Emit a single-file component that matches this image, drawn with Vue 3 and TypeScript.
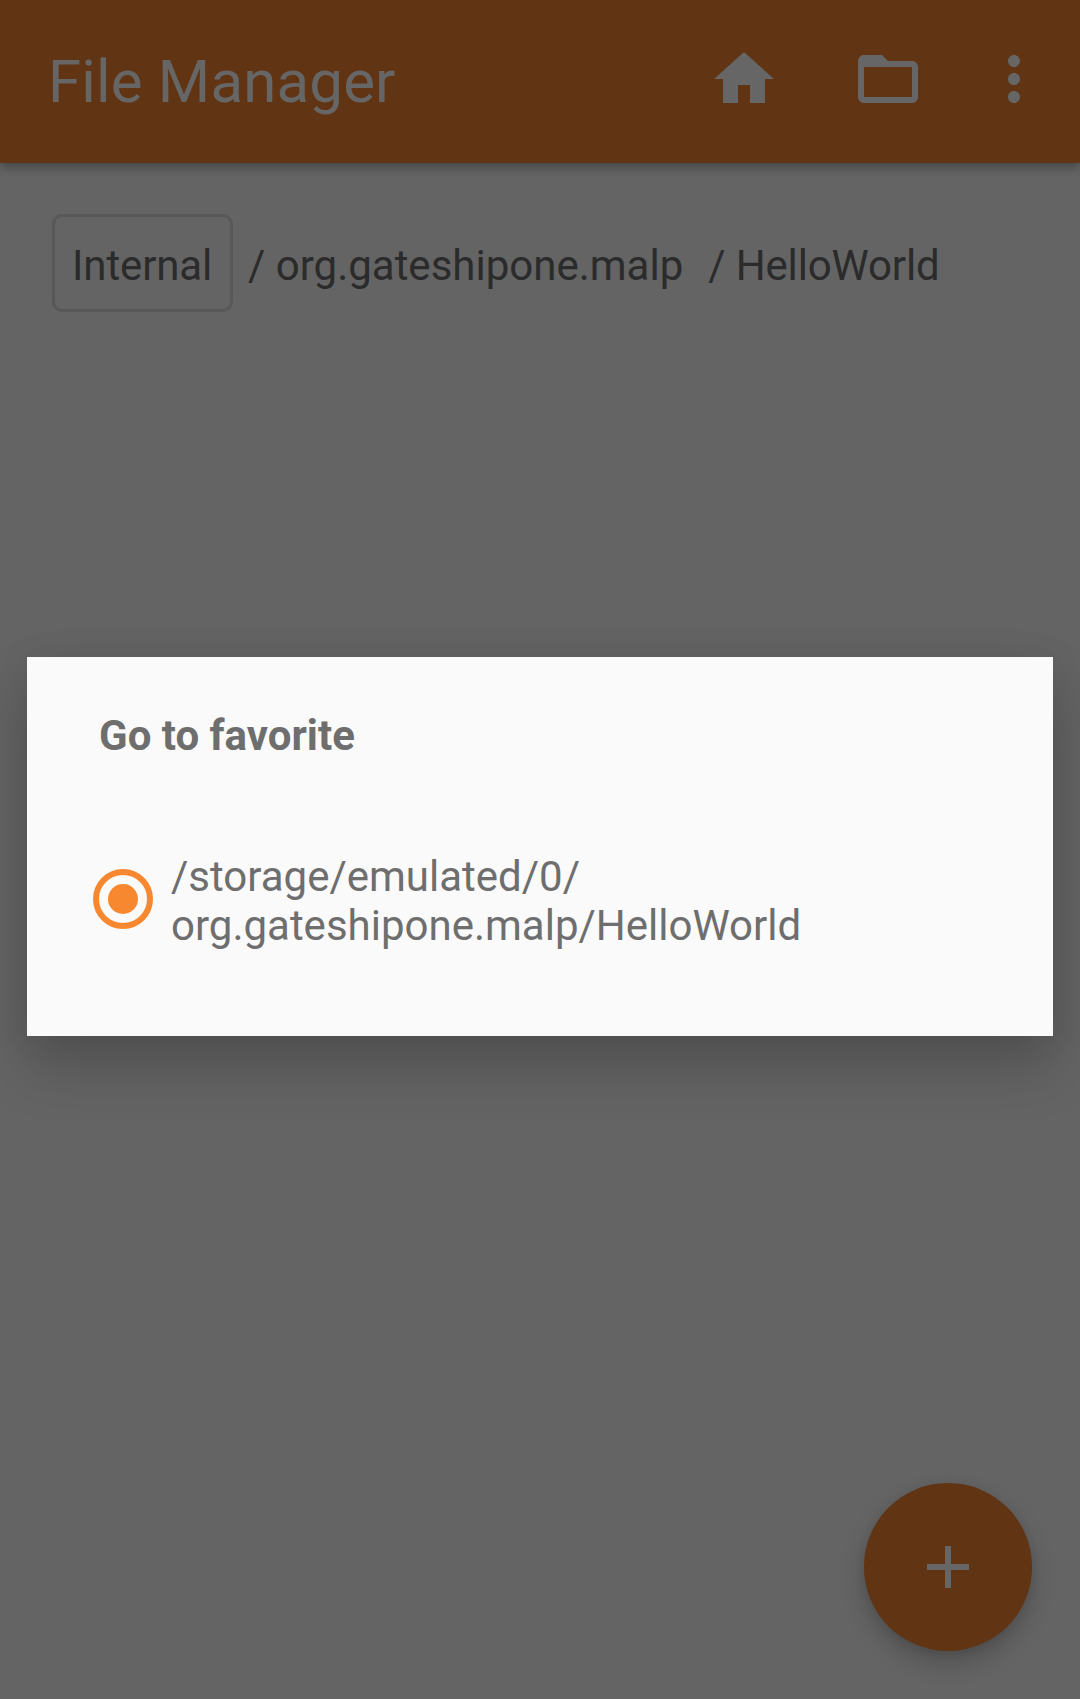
<script setup lang="ts">
import { ref } from 'vue'

const crumbs = ref<string[]>(['org.gateshipone.malp', 'HelloWorld'])
const favorites = ref<string[][]>([['/storage/emulated/0/', 'org.gateshipone.malp/HelloWorld']])
</script>

<template>
  <div class="screen">
    <header class="toolbar">
      <h1 class="title">File Manager</h1>
      <svg class="icon home" viewBox="0 0 24 24"><path d="M10 20v-6h4v6h5v-8h3L12 3 2 12h3v8z" /></svg>
      <svg class="icon folder" viewBox="0 0 24 24"><path d="M20 6h-8l-2-2H4c-1.1 0-1.99.9-1.99 2L2 18c0 1.1.9 2 2 2h16c1.1 0 2-.9 2-2V8c0-1.1-.9-2-2-2zm0 12H4V8h16v10z" /></svg>
      <svg class="icon more" viewBox="0 0 24 24"><path d="M12 8c1.1 0 2-.9 2-2s-.9-2-2-2-2 .9-2 2 .9 2 2 2zm0 2c-1.1 0-2 .9-2 2s.9 2 2 2 2-.9 2-2-.9-2-2-2zm0 6c-1.1 0-2 .9-2 2s.9 2 2 2 2-.9 2-2-.9-2-2-2z" /></svg>
    </header>

    <nav class="crumbs">
      <span class="root">Internal</span>
      <span v-for="c in crumbs" :key="c" class="crumb">/ {{ c }}</span>
    </nav>

    <button class="fab" aria-label="Add">
      <svg viewBox="0 0 24 24"><path d="M19 13h-6v6h-2v-6H5v-2h6V5h2v6h6z" /></svg>
    </button>

    <section class="dialog">
      <h2 class="dialog-title">Go to favorite</h2>
      <div v-for="(f, i) in favorites" :key="i" class="option">
        <svg class="radio" viewBox="0 0 60 60">
          <circle cx="30" cy="30" r="27" fill="none" stroke="#f88830" stroke-width="6" />
          <circle cx="30" cy="30" r="15" fill="#f88830" />
        </svg>
        <div class="path"><div v-for="line in f" :key="line">{{ line }}</div></div>
      </div>
    </section>
  </div>
</template>

<style>
body { margin: 0; background: #646464; }
</style>

<style scoped>
.screen {
  position: relative;
  width: 1080px;
  height: 1699px;
  overflow: hidden;
  background: #646464;
  font-family: Roboto, "Liberation Sans", sans-serif;
}
.toolbar {
  display: flex;
  height: 163px;
  box-sizing: border-box;
  padding: 43px 30px 0 48px;
  background: #613413;
  box-shadow: 0 4px 10px rgba(0, 0, 0, 0.32);
}
.title {
  flex: 1;
  margin: 4px 0 0;
  font-size: 60px;
  line-height: 70px;
  font-weight: 400;
  letter-spacing: 0.16px;
  color: #666;
}
.icon { width: 72px; height: 72px; fill: #666; }
.folder { margin-left: 72px; }
.more { margin-left: 54px; }
.crumbs {
  display: flex;
  height: 98px;
  margin: 51px 0 0 52px;
  font-size: 42px;
  line-height: 49px;
  color: #2b2b2b;
  white-space: pre;
}
.root {
  box-sizing: border-box;
  width: 181px;
  height: 98px;
  padding: 24px 0 0 17px;
  border: 3px solid #585858;
  border-radius: 10px;
  letter-spacing: -0.12px;
}
.crumb { margin: 27px 0 0 15px; }
.crumb + .crumb { margin-left: 25px; letter-spacing: -0.15px; }
.fab {
  position: absolute;
  left: 864px;
  top: 1483px;
  display: flex;
  align-items: center;
  justify-content: center;
  width: 168px;
  height: 168px;
  padding: 0;
  border: 0;
  border-radius: 50%;
  background: #613413;
  box-shadow: 0 12px 24px rgba(0, 0, 0, 0.2), 0 2px 8px rgba(0, 0, 0, 0.08);
}
.fab svg { width: 72px; height: 72px; fill: #666; }
.dialog {
  position: absolute;
  left: 27px;
  top: 657px;
  width: 1026px;
  height: 379px;
  box-sizing: border-box;
  padding: 54px 66px 0;
  background: #fafafa;
  color: #6e6e6e;
  box-shadow: 0 30px 54px rgba(0, 0, 0, 0.2), 0 0 36px rgba(0, 0, 0, 0.06);
}
.dialog-title {
  margin: 0 0 0 6px;
  font-size: 42px;
  line-height: 49px;
  font-weight: 700;
}
.option { display: flex; align-items: flex-start; margin-top: 91px; }
.radio { width: 60px; height: 60px; margin-top: 18px; }
.path { margin: 1px 0 0 18px; font-size: 42px; line-height: 49px; }
</style>
